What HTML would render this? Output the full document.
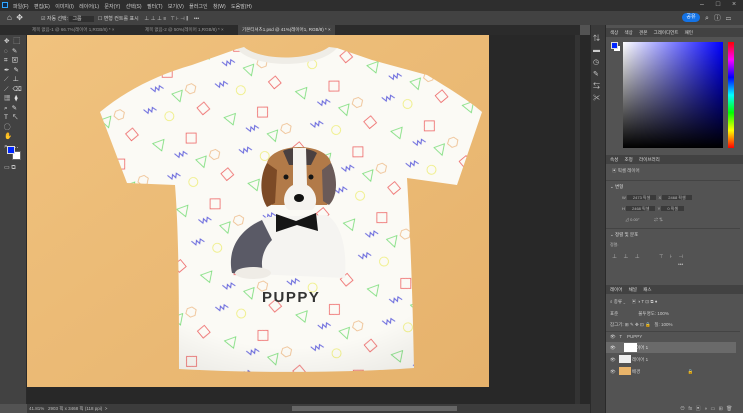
<!DOCTYPE html>
<html><head><meta charset="utf-8"><style>
*{margin:0;padding:0;box-sizing:border-box}
body{width:743px;height:413px;background:#535353;font-family:"Liberation Sans","Noto Sans CJK KR",sans-serif;font-size:5px;color:#ccc;position:relative;overflow:hidden}
.a{position:absolute}
.t{white-space:nowrap}
</style></head><body>
<div class="a" style="left:0;top:0;width:743px;height:11px;background:#2e2e2e"></div>
<div class="a" style="left:2px;top:2px;width:6px;height:6px;background:#0e2a4e;border:1px solid #31a8ff"></div>
<div class="a t" style="left:13px;top:3px;color:#ccc;word-spacing:4px">파일(F) 편집(E) 이미지(I) 레이어(L) 문자(Y) 선택(S) 필터(T) 보기(V) 플러그인 창(W) 도움말(H)</div>
<div class="a t" style="left:700px;top:1px;color:#bbb;font-size:7px;word-spacing:10px">– □ ×</div>
<div class="a" style="left:0;top:11px;width:743px;height:14px;background:#424242"></div>
<div class="a t" style="left:7px;top:13px;font-size:8px;color:#ddd">⌂ &nbsp;✥</div>
<div class="a t" style="left:41px;top:15px;color:#ccc">☑ 자동 선택: <span style="background:#2f2f2f;padding:0 12px 0 3px">그룹</span> &nbsp; ☐ 변형 컨트롤 표시 &nbsp;&nbsp; ⊥ ⊥ ⊥ ≡ &nbsp; ⊤ ⊦ ⊣ ⫼ &nbsp;&nbsp; •••</div>
<div class="a" style="left:682px;top:13px;width:18px;height:9px;background:#1473e6;border-radius:5px;color:#fff;text-align:center;line-height:9px">공유</div>
<div class="a t" style="left:705px;top:13px;font-size:7px;color:#ccc;word-spacing:3px">⌕ ⓘ ▭</div>
<div class="a" style="left:0;top:25px;width:580px;height:10px;background:#2b2b2b"></div>
<div class="a t" style="left:32px;top:27px;color:#999;font-size:4.5px">제목 없음-1 @ 66.7%(레이어 1,RGB/8) * ×</div>
<div class="a t" style="left:145px;top:27px;color:#999;font-size:4.5px">제목 없음-2 @ 50%(레이어 1,RGB/8) * ×</div>
<div class="a" style="left:238px;top:25px;width:97px;height:10px;background:#444"></div>
<div class="a t" style="left:242px;top:27px;color:#ddd;font-size:4.5px">기본티셔츠1.psd @ 41%(레이어1, RGB/8) * ×</div>
<div class="a" style="left:0;top:35px;width:27px;height:369px;background:#424242;border-right:1px solid #2a2a2a"></div>
<div class="a t" style="left:4px;top:37px;font-size:6.5px;line-height:9.5px;color:#ddd;width:22px;white-space:normal;letter-spacing:4px">✥⬚ ◌✎ ⌗⊠ ✒✎ ⟋⊥ ⟋⌫ ▦⧫ ⌕✎ T↖ ◯✋ ⌕⋯</div>
<div class="a" style="left:12px;top:151px;width:9px;height:9px;background:#fff;border:1px solid #666"></div>
<div class="a" style="left:7px;top:146px;width:8px;height:8px;background:#0026ff;border:1px solid #ddd"></div>
<div class="a t" style="left:4px;top:164px;font-size:6px;color:#ccc">▭ ⧉</div>
<div class="a" style="left:27px;top:35px;width:563px;height:369px;background:#282828"></div>
<div class="a" style="left:575px;top:35px;width:5px;height:369px;background:#333"></div>
<svg class="a" style="left:27px;top:35px" width="462" height="352" viewBox="0 0 462 352">
<defs>
<linearGradient id="bg" x1="0" y1="0" x2="1" y2="1"><stop offset="0" stop-color="#f0c27e"/><stop offset="1" stop-color="#e6b26c"/></linearGradient>
<pattern id="pt" width="76" height="70" patternUnits="userSpaceOnUse" patternTransform="rotate(-20)">
<rect width="76" height="70" fill="#fbfaf5"/>
<polygon points="5,5 17,5 11,15" fill="none" stroke="#7d7" stroke-width="0.8"/>
<rect x="38" y="8" width="10" height="10" transform="rotate(20 43 13)" fill="none" stroke="#e66" stroke-width="0.8"/>
<polygon points="57,32 62,32 65,36 62,41 57,41 54,36" fill="none" stroke="#eb8" stroke-width="0.8"/>
<path d="M8,40 l3,5 l2,-4 l2,4 l2,-4 l3,4" fill="none" stroke="#66d" stroke-width="1"/>
<circle cx="30" cy="55" r="4.5" fill="none" stroke="#ee7" stroke-width="0.8"/>
<polygon points="40,35 51,35 45,45" fill="none" stroke="#7d7" stroke-width="0.8"/>
<rect x="60" y="55" width="9" height="9" transform="rotate(-20 64 59)" fill="none" stroke="#e66" stroke-width="0.8"/>
<path d="M22,22 l3,5 l2,-4 l2,4 l2,-4 l3,4" fill="none" stroke="#66d" stroke-width="1"/>
</pattern>
<radialGradient id="sh" cx=".5" cy=".4" r=".7"><stop offset=".75" stop-color="#000" stop-opacity="0"/><stop offset="1" stop-color="#000" stop-opacity=".08"/></radialGradient>
</defs>
<rect width="462" height="352" fill="url(#bg)"/>
<path id="sh1" d="M210,14 C228,28 290,28 310,13 L345,25 L400,40 C425,55 445,68 455,77 L430,150 L380,143 C384,210 386,280 387,333 C320,338 220,338 152,334 C152,270 152,200 148,150 L100,148 L73,77 C100,55 130,40 165,30 Z" fill="url(#pt)"/>
<path d="M210,14 C228,28 290,28 310,13 L345,25 L400,40 C425,55 445,68 455,77 L430,150 L380,143 C384,210 386,280 387,333 C320,338 220,338 152,334 C152,270 152,200 148,150 L100,148 L73,77 C100,55 130,40 165,30 Z" fill="url(#sh)"/>
<path d="M210,14 C228,34 292,34 310,13 L302,12 C282,26 234,26 217,12Z" fill="#efede7"/>
<!-- dog -->
<path d="M205,238 C200,215 215,190 240,182 L300,180 C315,190 320,215 318,243 Z" fill="#f5f4f1"/>
<path d="M205,238 C200,215 212,195 235,185 L245,205 C235,215 232,230 238,242 Z" fill="#5a5a66"/>
<ellipse cx="226" cy="238" rx="18" ry="6" fill="#efece6"/>
<path d="M240,128 C242,118 258,112 272,112 C288,112 302,118 304,128 C310,140 310,160 300,170 L245,170 C235,160 235,140 240,128Z" fill="#b27a48"/>
<path d="M240,128 C233,140 232,160 240,172 L248,168 L250,135Z" fill="#7c4a26"/>
<path d="M304,128 C310,140 312,160 302,170 L296,166 L295,135Z" fill="#6a5a58"/>
<path d="M256,116 C262,112 282,112 290,118 L284,130 L262,130Z" fill="#4a4040"/>
<path d="M266,113 L279,113 L280,150 C290,155 292,170 285,175 L262,175 C254,170 256,155 266,150Z" fill="#f5f3ef"/>
<circle cx="259" cy="142" r="2.5" fill="#151515"/><circle cx="284" cy="142" r="2.5" fill="#151515"/>
<ellipse cx="272" cy="163" rx="5" ry="4" fill="#111"/>
<path d="M249,179 L269,186 L289,178 L291,196 L270,190 L249,197Z" fill="#161616"/>
<text x="235" y="267" font-family="Liberation Sans,sans-serif" font-weight="bold" font-size="15" fill="#333" letter-spacing="1.5">PUPPY</text>
</svg>
<div class="a" style="left:27px;top:404px;width:563px;height:9px;background:#3c3c3c"></div>
<div class="a t" style="left:29px;top:406px;color:#bbb;font-size:4.5px">41.81% &nbsp; 2903 픽 x 3468 픽 (118 ppi) &nbsp;&gt;</div>
<div class="a" style="left:292px;top:406px;width:165px;height:5px;background:#666"></div>
<div class="a" style="left:590px;top:25px;width:16px;height:388px;background:#3a3a3a;border-left:1px solid #2a2a2a;border-right:1px solid #2a2a2a"></div>
<div class="a t" style="left:593px;top:33px;font-size:7px;line-height:12px;color:#ccc;white-space:normal;width:10px">⇅ ▬ ◷ ✎ ⇆ ✂</div>
<div class="a" style="left:606px;top:25px;width:137px;height:388px;background:#535353"></div>
<div class="a" style="left:606px;top:28px;width:137px;height:9px;background:#424242"></div>
<div class="a t" style="left:610px;top:30px;font-size:4.5px;color:#ddd;word-spacing:5px">색상 색상 견본 그레이디언트 패턴</div>
<div class="a" style="left:614px;top:46px;width:6px;height:5px;background:#fff"></div>
<div class="a" style="left:611px;top:42px;width:7px;height:7px;background:#0026ff;border:1px solid #ddd"></div>
<div class="a" style="left:623px;top:42px;width:100px;height:106px;background:linear-gradient(to bottom,rgba(0,0,0,0),#000),linear-gradient(to right,#fff,#0000ff)"></div>
<div class="a" style="left:728px;top:42px;width:6px;height:106px;background:linear-gradient(#f00,#f0f,#00f,#0ff,#0f0,#ff0,#f00)"></div>
<div class="a" style="left:606px;top:155px;width:137px;height:9px;background:#424242"></div>
<div class="a t" style="left:610px;top:157px;font-size:4.5px;color:#ddd;word-spacing:5px">속성 조정 라이브러리</div>
<div class="a t" style="left:612px;top:168px;font-size:4.5px;color:#ccc">▣ 픽셀 레이어</div>
<div class="a" style="left:606px;top:180px;width:134px;height:1px;background:#444"></div>
<div class="a t" style="left:610px;top:184px;font-size:4.5px;color:#ddd">⌄ 변형</div>
<div class="a t" style="left:622px;top:195px;font-size:4px;color:#bbb">W <span style="background:#3a3a3a;padding:0 6px">2473 픽셀</span> &nbsp;X <span style="background:#3a3a3a;padding:0 6px">2468 픽셀</span></div>
<div class="a t" style="left:622px;top:206px;font-size:4px;color:#bbb">H <span style="background:#3a3a3a;padding:0 6px">2468 픽셀</span> &nbsp;Y <span style="background:#3a3a3a;padding:0 6px">0 픽셀</span></div>
<div class="a t" style="left:625px;top:217px;font-size:4px;color:#bbb">⊿ 0.00° &nbsp;&nbsp;&nbsp;&nbsp;&nbsp;&nbsp;&nbsp;&nbsp;&nbsp;&nbsp;&nbsp; ⇄ ⇅</div>
<div class="a" style="left:606px;top:228px;width:134px;height:1px;background:#444"></div>
<div class="a t" style="left:610px;top:232px;font-size:4.5px;color:#ddd">⌄ 정렬 및 분포</div>
<div class="a t" style="left:610px;top:242px;font-size:4px;color:#bbb">정렬:</div>
<div class="a t" style="left:612px;top:253px;font-size:5px;color:#bbb;word-spacing:5px">⊥ ⊥ ⊥ &nbsp; ⊤ ⊦ ⊣</div>
<div class="a t" style="left:678px;top:262px;color:#bbb">•••</div>
<div class="a" style="left:606px;top:285px;width:137px;height:9px;background:#424242"></div>
<div class="a t" style="left:610px;top:287px;font-size:4.5px;color:#ddd;word-spacing:5px">레이어 채널 패스</div>
<div class="a t" style="left:610px;top:299px;font-size:4.5px;color:#ccc">⌕ 종류 ⌄ &nbsp;&nbsp;&nbsp; ▣ ◑ T ⊡ ⧉ ●</div>
<div class="a t" style="left:610px;top:311px;font-size:4.5px;color:#ccc">표준 &nbsp;&nbsp;&nbsp;&nbsp;&nbsp;&nbsp;&nbsp;&nbsp;&nbsp;&nbsp;&nbsp;&nbsp;&nbsp;&nbsp; 불투명도: 100%</div>
<div class="a t" style="left:610px;top:322px;font-size:4.5px;color:#ccc">잠그기: ⊞ ✎ ✥ ⊡ 🔒 &nbsp; 칠: 100%</div>
<div class="a" style="left:606px;top:331px;width:134px;height:1px;background:#444"></div>
<div class="a t" style="left:610px;top:334px;font-size:4.5px;color:#ccc">👁 &nbsp; T &nbsp;&nbsp; PUPPY</div>
<div class="a" style="left:606px;top:342px;width:130px;height:11px;background:#6a6a6a"></div>
<div class="a t" style="left:610px;top:345px;font-size:4.5px;color:#ddd">👁 &nbsp;&nbsp;&nbsp;&nbsp;&nbsp;&nbsp;&nbsp;&nbsp;&nbsp;&nbsp;&nbsp; 레이어 1</div>
<div class="a" style="left:624px;top:343px;width:13px;height:9px;background:#fff"></div>
<div class="a t" style="left:610px;top:357px;font-size:4.5px;color:#ccc">👁 &nbsp;&nbsp;&nbsp;&nbsp;&nbsp;&nbsp;&nbsp;&nbsp;&nbsp;&nbsp;&nbsp; 레이어 1</div>
<div class="a" style="left:619px;top:355px;width:12px;height:8px;background:#eee"></div>
<div class="a t" style="left:610px;top:369px;font-size:4.5px;color:#ccc">👁 &nbsp;&nbsp;&nbsp;&nbsp;&nbsp;&nbsp;&nbsp;&nbsp;&nbsp;&nbsp;&nbsp; 배경 &nbsp;&nbsp;&nbsp;&nbsp;&nbsp;&nbsp;&nbsp;&nbsp;&nbsp;&nbsp;&nbsp;&nbsp;&nbsp;&nbsp;&nbsp;&nbsp;&nbsp;&nbsp;&nbsp;&nbsp;&nbsp;&nbsp;&nbsp;&nbsp;&nbsp;&nbsp;&nbsp;&nbsp;&nbsp;&nbsp;&nbsp;&nbsp;&nbsp;&nbsp;&nbsp;&nbsp; 🔒</div>
<div class="a" style="left:619px;top:367px;width:12px;height:8px;background:#e9b46a"></div>
<div class="a t" style="left:680px;top:405px;font-size:5px;color:#bbb;word-spacing:2px">⊖ fx ▣ ◑ ▭ ⊞ 🗑</div>
</body></html>
